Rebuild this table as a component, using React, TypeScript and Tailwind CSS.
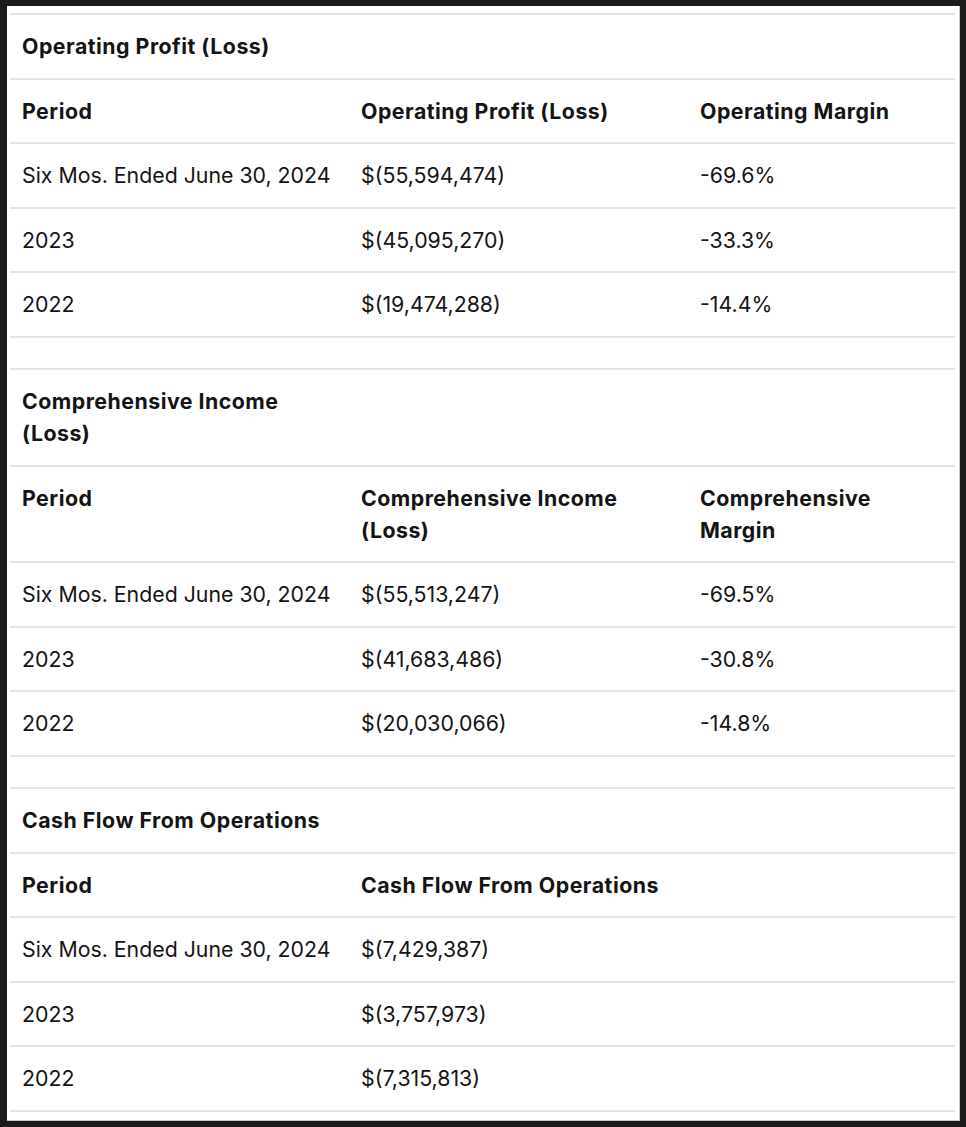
import React from 'react';

type Section = {
  title: string;
  headers: string[];
  rows: string[][];
};

// line breaks in titles follow the narrow column wrap of the source table
const sections: Section[] = [
  {
    title: 'Operating Profit (Loss)',
    headers: ['Period', 'Operating Profit (Loss)', 'Operating Margin'],
    rows: [
      ['Six Mos. Ended June 30, 2024', '$(55,594,474)', '-69.6%'],
      ['2023', '$(45,095,270)', '-33.3%'],
      ['2022', '$(19,474,288)', '-14.4%'],
    ],
  },
  {
    title: 'Comprehensive Income\n(Loss)',
    headers: ['Period', 'Comprehensive Income\n(Loss)', 'Comprehensive\nMargin'],
    rows: [
      ['Six Mos. Ended June 30, 2024', '$(55,513,247)', '-69.5%'],
      ['2023', '$(41,683,486)', '-30.8%'],
      ['2022', '$(20,030,066)', '-14.8%'],
    ],
  },
  {
    title: 'Cash Flow From Operations',
    headers: ['Period', 'Cash Flow From Operations'],
    rows: [
      ['Six Mos. Ended June 30, 2024', '$(7,429,387)'],
      ['2023', '$(3,757,973)'],
      ['2022', '$(7,315,813)'],
    ],
  },
];

const cell = 'px-3 py-[15.25px] align-top text-left';
const head = `${cell} font-bold tracking-[0.5px] whitespace-pre-line`;

const App: React.FC = () => {
  return (
    <div className="min-h-screen bg-[#1b1b1b] pl-[7px] pt-[6px] font-['Inter',_'Liberation_Sans',_sans-serif] text-[21.3px] leading-8 text-[#141414]">
      <div className="w-[953px] h-[1115px] bg-white border-r border-b border-[#c9c9c9] pt-[7px] pl-[3px]">
        <table className="w-[945px] table-fixed border-collapse">
          <colgroup>
            <col className="w-[339px]" />
            <col className="w-[339px]" />
            <col className="w-[267px]" />
          </colgroup>
          <tbody>
            {sections.map((s, si) => (
              <React.Fragment key={s.title}>
                {si > 0 && (
                  <tr className="border-b-2 border-[#e4e4e4]">
                    <td className={cell}></td>
                    <td className={cell}></td>
                    <td className={cell}></td>
                  </tr>
                )}
                <tr className={`border-b-2 border-[#e4e4e4] ${si === 0 ? 'border-t-2' : ''}`}>
                  <th className={head}>{s.title}</th>
                  <td className={cell}></td>
                  <td className={cell}></td>
                </tr>
                <tr className="border-b-2 border-[#e4e4e4]">
                  {[0, 1, 2].map((i) => (
                    <th key={i} className={head}>{s.headers[i] ?? ''}</th>
                  ))}
                </tr>
                {s.rows.map((r) => (
                  <tr key={r[0]} className="border-b-2 border-[#e4e4e4]">
                    {[0, 1, 2].map((i) => (
                      <td key={i} className={`${cell} font-normal`}>{r[i] ?? ''}</td>
                    ))}
                  </tr>
                ))}
              </React.Fragment>
            ))}
          </tbody>
        </table>
      </div>
    </div>
  );
};

export default App;
